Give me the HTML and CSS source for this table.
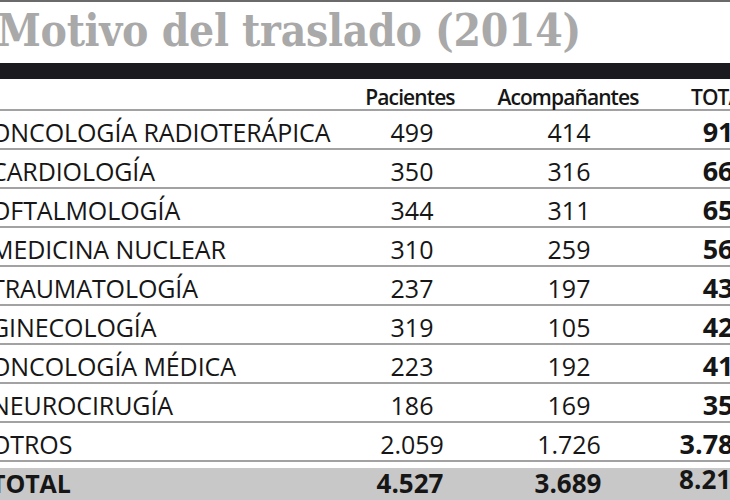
FILE: index.html
```html
<!DOCTYPE html>
<html lang="es">
<head>
<meta charset="utf-8">
<title>Motivo del traslado (2014)</title>
<link rel="stylesheet" href="styles.css">
</head>
<body>
<div class="page">
  <div class="topline"></div>
  <h1 class="title">Motivo del traslado (2014)</h1>
  <div class="bar"></div>
  <div class="table">
    <div class="row head">
      <div class="c1"></div>
      <div class="c2">Pacientes</div>
      <div class="c3">Acompañantes</div>
      <div class="c4">TOTAL</div>
    </div>
    <div class="row"><div class="c1">ONCOLOGÍA RADIOTERÁPICA</div><div class="c2">499</div><div class="c3">414</div><div class="c4">913</div></div>
    <div class="row"><div class="c1">CARDIOLOGÍA</div><div class="c2">350</div><div class="c3">316</div><div class="c4">666</div></div>
    <div class="row"><div class="c1">OFTALMOLOGÍA</div><div class="c2">344</div><div class="c3">311</div><div class="c4">655</div></div>
    <div class="row"><div class="c1">MEDICINA NUCLEAR</div><div class="c2">310</div><div class="c3">259</div><div class="c4">569</div></div>
    <div class="row"><div class="c1">TRAUMATOLOGÍA</div><div class="c2">237</div><div class="c3">197</div><div class="c4">434</div></div>
    <div class="row"><div class="c1">GINECOLOGÍA</div><div class="c2">319</div><div class="c3">105</div><div class="c4">424</div></div>
    <div class="row"><div class="c1">ONCOLOGÍA MÉDICA</div><div class="c2">223</div><div class="c3">192</div><div class="c4">415</div></div>
    <div class="row"><div class="c1">NEUROCIRUGÍA</div><div class="c2">186</div><div class="c3">169</div><div class="c4">355</div></div>
    <div class="row"><div class="c1">OTROS</div><div class="c2">2.059</div><div class="c3">1.726</div><div class="c4">3.785</div></div>
    <div class="row total"><div class="c1">TOTAL</div><div class="c2">4.527</div><div class="c3">3.689</div><div class="c4 raised">8.216</div></div>
  </div>
</div>
</body>
</html>
```
FILE: styles.css
```css
html, body {
  margin: 0;
  padding: 0;
  background: #ffffff;
  overflow: hidden;
}
.page {
  width: 760px;
  margin-left: -9px;
  height: 500px;
  overflow: hidden;
  font-family: "Open Sans", "Liberation Sans", sans-serif;
  color: #161616;
}
.topline {
  height: 2px;
  background: #6a6a6a;
}
.title {
  margin: 0;
  height: 61px;
  box-sizing: border-box;
  padding-top: 1px;
  padding-left: 6px;
  font-family: "DejaVu Serif", serif;
  font-stretch: condensed;
  font-weight: bold;
  font-size: 44px;
  line-height: 56px;
  color: #a9a9a9;
  letter-spacing: -0.3px;
  white-space: nowrap;
}
.bar {
  height: 16px;
  background: #1b1b1f;
}
.table {
  display: flex;
  flex-direction: column;
}
.row {
  display: grid;
  grid-template-columns: 349px 140px 170px 100px;
  height: 39px;
  box-sizing: border-box;
  border-bottom: 2px solid #a2a2a2;
  align-items: center;
  padding-top: 4px;
  font-size: 25px;
}
.row .c1 {
  white-space: nowrap;
  letter-spacing: -0.1px;
}
.row .c2, .row .c3 {
  text-align: center;
  font-size: 25px;
}
.row .c2 { padding-left: 4px; }
.row .c3 { padding-left: 8px; }
.row .c4 {
  text-align: right;
  font-weight: bold;
  font-size: 27px;
  line-height: 30px;
  padding-right: 1px;
  white-space: nowrap;
}
.row.head {
  height: 32px;
  padding-top: 3px;
  font-size: 21px;
  font-weight: 600;
  letter-spacing: -0.9px;
}
.row.head .c2, .row.head .c3 {
  font-size: 21px;
}
.row.head .c2 { padding-left: 0; }
.row.head .c3 { padding-left: 6px; }
.row.head .c4 {
  font-size: 21px;
  font-weight: 600;
  text-align: left;
  padding-left: 41px;
  padding-right: 0;
}
.row.total {
  border-bottom: none;
  margin-top: 6px;
  height: 40px;
  padding-top: 0;
  align-items: start;
  background: #c8c8c8;
  font-weight: bold;
}
.row.total .c1 {
  font-weight: bold;
  line-height: 31px;
}
.row.total .c2, .row.total .c3 {
  font-weight: bold;
  font-size: 26px;
  line-height: 31px;
}
.row.total .c2 { padding-left: 0; }
.row.total .c3 { padding-left: 6px; }
.row.total .raised {
  font-size: 26px;
  line-height: 16px;
  padding-top: 3px;
  padding-right: 4px;
}
```
